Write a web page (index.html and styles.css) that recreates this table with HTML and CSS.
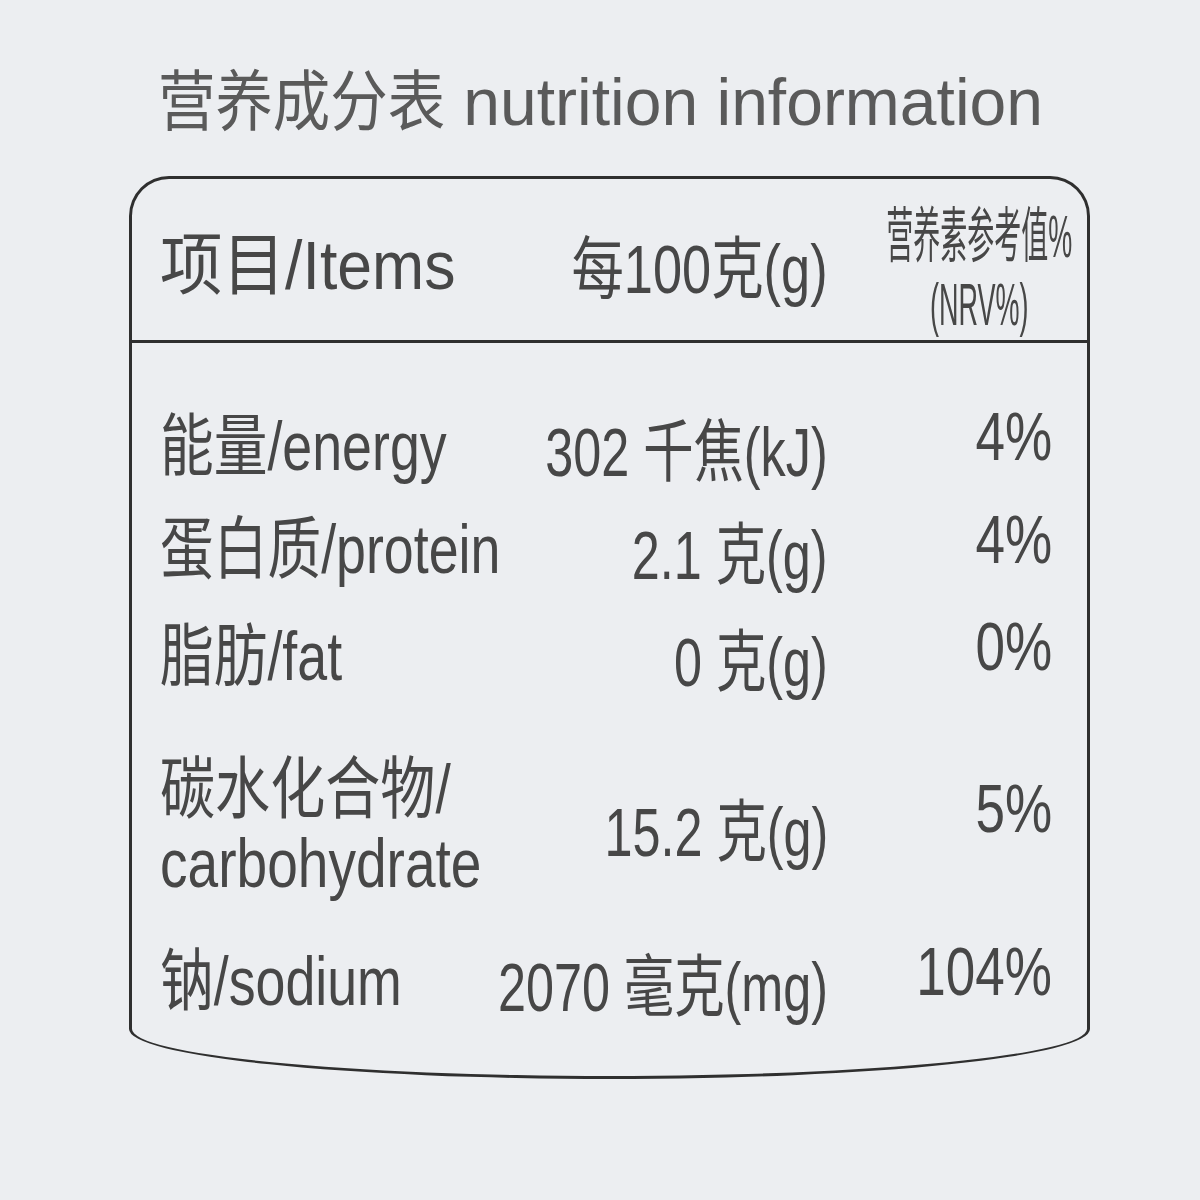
FILE: index.html
```html
<!DOCTYPE html>
<html lang="zh-CN">
<head>
<meta charset="utf-8">
<title>营养成分表 nutrition information</title>
<link rel="stylesheet" href="styles.css">
</head>
<body>
<div class="page">
  <h1 class="title"><span class="title-zh">营养成分表</span> nutrition information</h1>
  <div class="label">
    <div class="head">
      <div class="cell c-item"><span class="t t-head">项目/Items</span></div>
      <div class="cell c-amt"><span class="t">每100克(g)</span></div>
      <div class="cell c-nrv c-nrvhead"><span class="t t-nrvhead">营养素参考值%<br>(NRV%)</span></div>
    </div>
    <div class="body">
      <div class="row r1">
        <div class="cell c-item"><span class="t">能量/energy</span></div>
        <div class="cell c-amt"><span class="t">302 千焦(kJ)</span></div>
        <div class="cell c-nrv"><span class="t">4%</span></div>
      </div>
      <div class="row r2">
        <div class="cell c-item"><span class="t">蛋白质/protein</span></div>
        <div class="cell c-amt"><span class="t">2.1 克(g)</span></div>
        <div class="cell c-nrv"><span class="t">4%</span></div>
      </div>
      <div class="row r3">
        <div class="cell c-item"><span class="t">脂肪/fat</span></div>
        <div class="cell c-amt"><span class="t">0 克(g)</span></div>
        <div class="cell c-nrv"><span class="t">0%</span></div>
      </div>
      <div class="row r4">
        <div class="cell c-item"><span class="t t-carb">碳水化合物/<br>carbohydrate</span></div>
        <div class="cell c-amt"><span class="t">15.2 克(g)</span></div>
        <div class="cell c-nrv"><span class="t">5%</span></div>
      </div>
      <div class="row r5">
        <div class="cell c-item"><span class="t">钠/sodium</span></div>
        <div class="cell c-amt"><span class="t">2070 毫克(mg)</span></div>
        <div class="cell c-nrv"><span class="t">104%</span></div>
      </div>
    </div>
  </div>
</div>
</body>
</html>
```

FILE: styles.css
```css
* {
  box-sizing: border-box;
  margin: 0;
  padding: 0;
}

html, body {
  width: 1200px;
  height: 1200px;
  overflow: hidden;
}

body {
  background: #eceef1;
  font-family: "Liberation Sans", "Noto Sans CJK SC", sans-serif;
  color: #474747;
}

.page {
  width: 1200px;
  height: 1200px;
  filter: blur(0.5px);
}

.title {
  font-weight: normal;
  font-size: 66px;
  line-height: 80px;
  height: 176px;
  padding: 62px 0 0 158px;
  color: #5a5a5a;
  white-space: nowrap;
}

.title-zh {
  display: inline-block;
  transform: scaleX(0.87);
  transform-origin: left center;
  margin-right: -43px;
}

.label {
  margin-left: 129px;
  width: 961px;
  border: 3px solid #2f2f2f;
  border-radius: 40px 40px 50% 50% / 40px 40px 50px 50px;
}

.head,
.row {
  display: grid;
  grid-template-columns: minmax(0, 1fr) 300px 244px;
  align-items: center;
  padding: 0 15px 0 28px;
}

.head {
  height: 164px;
  padding-top: 10px;
  border-bottom: 3px solid #2f2f2f;
}

.body {
  padding: 51px 0 54px;
}

.r1 { height: 104px; }
.r2 { height: 102px; }
.r3 { height: 112px; }
.r4 { height: 228px; }
.r5 { height: 82px; }

.cell {
  display: flex;
  align-items: center;
  min-width: 0;
  white-space: nowrap;
}

.t {
  flex: none;
  display: inline-block;
  font-size: 68px;
  line-height: 74px;
  white-space: nowrap;
  transform: scaleX(0.79);
  transform-origin: left center;
}

.t-head {
  transform: scaleX(0.92);
}

.t-carb {
  transform: scaleX(0.81);
}

.c-amt,
.c-nrv {
  justify-content: flex-end;
  text-align: right;
}

.c-amt .t {
  transform-origin: right center;
  transform: translateY(6px) scaleX(0.74);
}

.head .c-amt .t {
  transform: translateY(4px) scaleX(0.77);
}

.c-nrv {
  padding-right: 20px;
}

.c-nrv .t {
  transform-origin: right center;
  transform: translateY(-10px) scaleX(0.78);
}

.r4 .c-nrv .t {
  transform: translateY(-18px) scaleX(0.78);
}

.c-nrvhead {
  padding-right: 0;
}

.c-nrvhead .t-nrvhead {
  font-size: 60px;
  line-height: 68px;
  text-align: center;
  transform: translateY(6px) scaleX(0.45);
}
```
